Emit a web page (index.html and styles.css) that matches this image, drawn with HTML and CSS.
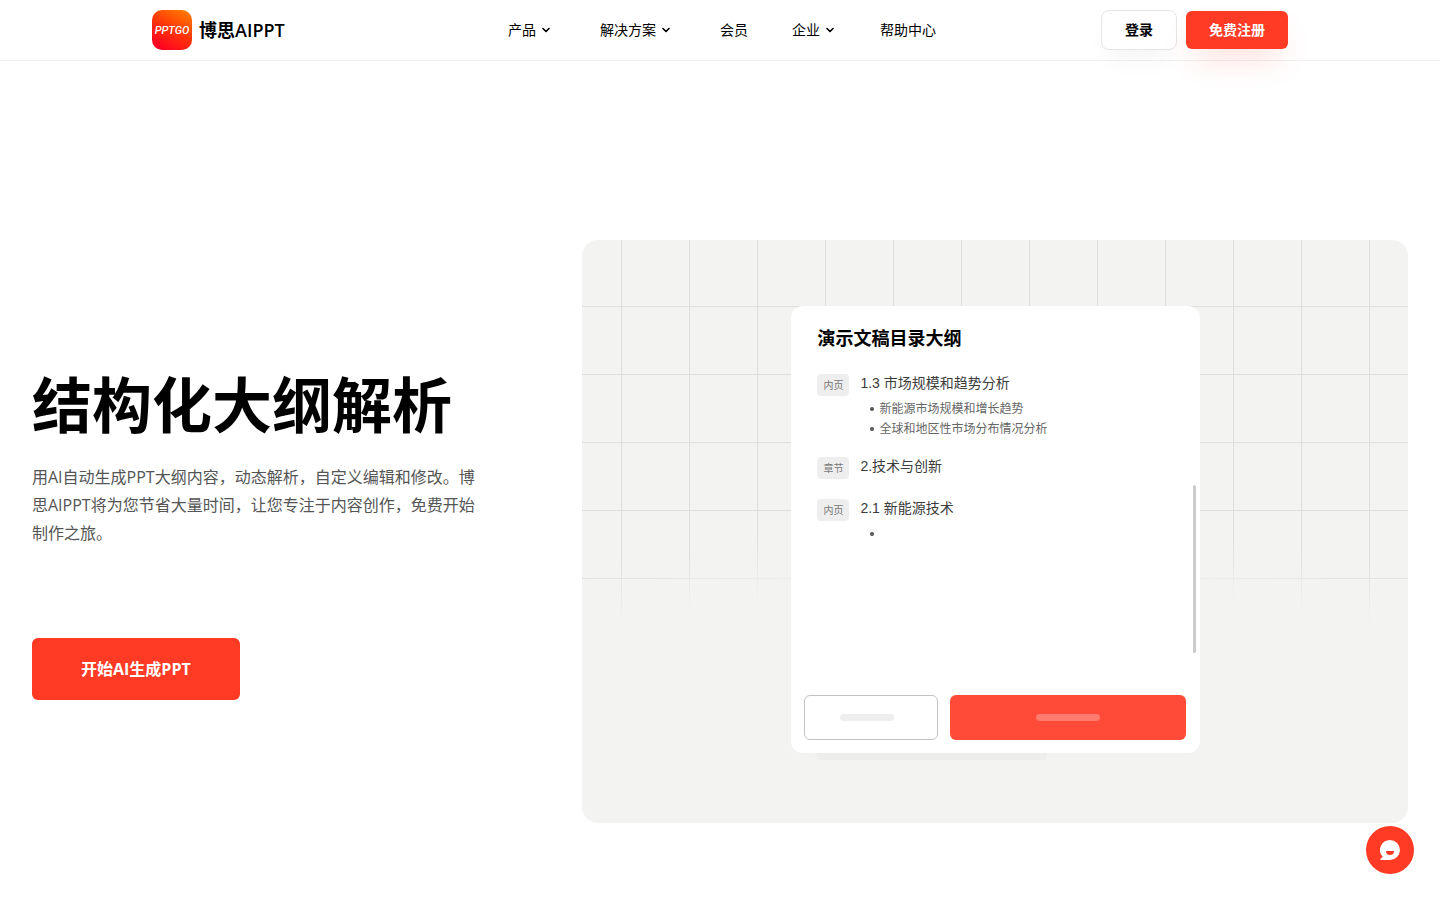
FILE: index.html
```html
<!DOCTYPE html>
<html lang="zh-CN">
<head>
<meta charset="utf-8">
<meta name="viewport" content="width=device-width, initial-scale=1">
<title>博思AIPPT</title>
<link rel="stylesheet" href="styles.css">
</head>
<body>
<header class="header">
  <div class="header-inner">
    <a class="brand" href="#">
      <svg class="brand-mark" viewBox="0 0 40 40" aria-hidden="true">
        <defs>
          <linearGradient id="mark" x1="0.25" y1="1" x2="0.8" y2="0">
            <stop offset="0" stop-color="#ff0024"/>
            <stop offset="0.5" stop-color="#ff3408"/>
            <stop offset="1" stop-color="#ff7a00"/>
          </linearGradient>
        </defs>
        <rect width="40" height="40" rx="10" fill="url(#mark)"/>
        <text x="20" y="24" text-anchor="middle" class="mark-text">PPTGO</text>
      </svg>
      <span class="brand-name">博思AIPPT</span>
    </a>
    <nav class="nav">
      <a href="#">产品<svg class="chevron" viewBox="0 0 8 6"><path d="M1 1.500l3 3 3-3"/></svg></a>
      <a href="#">解决方案<svg class="chevron" viewBox="0 0 8 6"><path d="M1 1.500l3 3 3-3"/></svg></a>
      <a href="#">会员</a>
      <a href="#">企业<svg class="chevron" viewBox="0 0 8 6"><path d="M1 1.500l3 3 3-3"/></svg></a>
      <a href="#">帮助中心</a>
    </nav>
    <div class="account">
      <button class="btn btn-login" type="button">登录</button>
      <button class="btn btn-register" type="button">免费注册</button>
    </div>
  </div>
</header>

<main class="hero">
  <section class="intro">
    <h1>结构化大纲解析</h1>
    <p>用AI自动生成PPT大纲内容，动态解析，自定义编辑和修改。博思AIPPT将为您节省大量时间，让您专注于内容创作，免费开始制作之旅。</p>
    <a class="cta" href="#">开始AI生成PPT</a>
  </section>

  <section class="panel">
    <svg class="panel-grid" aria-hidden="true">
      <defs>
        <pattern id="cells" x="39" y="66" width="68" height="68" patternUnits="userSpaceOnUse">
          <path d="M0 0.5H68M0.5 0V68" fill="none" stroke="#dededd"/>
        </pattern>
      </defs>
      <rect width="100%" height="100%" fill="url(#cells)"/>
    </svg>
    <div class="card">
      <h2>演示文稿目录大纲</h2>
      <ul class="outline">
        <li>
          <span class="tag">内页</span>
          <div class="entry">
            <h3>1.3 市场规模和趋势分析</h3>
            <ul class="points">
              <li>新能源市场规模和增长趋势</li>
              <li>全球和地区性市场分布情况分析</li>
            </ul>
          </div>
        </li>
        <li>
          <span class="tag">章节</span>
          <div class="entry"><h3>2.技术与创新</h3></div>
        </li>
        <li>
          <span class="tag">内页</span>
          <div class="entry">
            <h3>2.1 新能源技术</h3>
            <ul class="points"><li></li></ul>
          </div>
        </li>
      </ul>
      <div class="card-actions">
        <div class="ghost ghost-outline"><span></span></div>
        <div class="ghost ghost-solid"><span></span></div>
      </div>
      <div class="scroll-thumb"></div>
    </div>
    <div class="card-tail"></div>
  </section>
</main>

<button class="chat" type="button" aria-label="客服">
  <svg viewBox="0 0 20 20" aria-hidden="true">
    <path d="M10 0a10 10 0 1 1 0 20H1c-.8 0-1-.8-.5-1.200C1.500 18 2.300 17.400 2.600 16.700A10 10 0 0 1 10 0z" fill="#fff"/>
    <path d="M6 11h8a4 4 0 0 1-8 0z" fill="#ff3b26"/>
  </svg>
</button>
</body>
</html>
```
FILE: styles.css
```css
* {
  box-sizing: border-box;
}

body,
h1,
h2,
h3,
p,
ul {
  margin: 0;
  padding: 0;
}

ul {
  list-style: none;
}

body {
  min-height: 100vh;
  background: #fff;
  color: #000;
  font-family: "Open Sans", "Noto Sans CJK SC", sans-serif;
  font-size: 14px;
}

a {
  color: inherit;
  text-decoration: none;
}

button {
  font: inherit;
  cursor: pointer;
}

.header {
  border-bottom: 1px solid #f2f2f2;
}

.header-inner {
  display: grid;
  grid-template-columns: 1fr auto 1fr;
  align-items: center;
  max-width: 1136px;
  height: 60px;
  margin: 0 auto;
}

.brand {
  display: flex;
  align-items: center;
  gap: 7px;
}

.brand-mark {
  width: 40px;
  height: 40px;
}

.mark-text {
  fill: #fff;
  font-family: Roboto, sans-serif;
  font-size: 11px;
  font-style: italic;
  font-weight: 500;
}

.brand-name {
  font-size: 18px;
  font-weight: 600;
  line-height: 26px;
}

.nav {
  display: grid;
  grid-template-columns: 92px 120px 72px 88px 56px;
  padding-left: 4px;
  line-height: 20px;
}

.nav a {
  display: flex;
  align-items: center;
  gap: 6px;
}

.chevron {
  width: 8px;
  height: 6px;
  fill: none;
  stroke: #000;
  stroke-width: 1.6;
  stroke-linecap: round;
  stroke-linejoin: round;
}

.account {
  display: flex;
  align-items: center;
  justify-content: flex-end;
  gap: 9px;
}

.btn {
  border: 0;
  border-radius: 6px;
  font-weight: 600;
  line-height: 20px;
}

.btn-login {
  padding: 9px 23px;
  border: 1px solid #e6e6e6;
  border-radius: 8px;
  background: #fff;
  box-shadow: 0 16px 24px -8px rgba(0, 0, 0, 0.05);
}

.btn-register {
  padding: 9px 23px;
  background: #ff3b26;
  color: #fff;
  box-shadow: 0 16px 32px -8px rgba(255, 59, 38, 0.2);
}

.hero {
  display: grid;
  grid-template-columns: 2fr 3fr;
  align-items: center;
  padding: 179px 32px 77px;
}

.intro {
  padding-right: 104px;
}

.intro h1 {
  font-size: 60px;
  font-weight: 700;
  line-height: 84px;
  white-space: nowrap;
}

.intro p {
  margin: 16px 0 91px;
  color: #555;
  font-size: 16px;
  font-weight: 400;
  line-height: 28px;
}

.cta {
  display: inline-block;
  padding: 19px 49px;
  border-radius: 6px;
  background: #ff3b26;
  color: #fff;
  font-size: 16px;
  font-weight: 700;
  line-height: 24px;
  vertical-align: top;
}

.panel {
  position: relative;
  padding: 66px 208px 63px 209px;
  border-radius: 16px;
  background: #f3f3f1;
}

.panel-grid {
  position: absolute;
  inset: 0;
  width: 100%;
  height: 100%;
  mask-image: radial-gradient(circle at 50% 2161px, transparent 1815px, #000 1880px);
}

.card {
  position: relative;
  display: flex;
  flex-direction: column;
  min-height: 447px;
  padding: 18px 14px 13px 13px;
  border-radius: 12px;
  background: #fff;
}

.card h2 {
  margin: 0 13px 21px;
  font-size: 18px;
  font-weight: 600;
  line-height: 28px;
}

.outline {
  display: flex;
  flex-direction: column;
  gap: 17px;
  margin: 0 13px;
}

.outline > li {
  display: flex;
  align-items: flex-start;
  gap: 11px;
}

.tag {
  flex: none;
  width: 32px;
  margin: 1px 0 2px;
  border-radius: 4px;
  background: #eee;
  color: #777;
  font-size: 10px;
  line-height: 22px;
  text-align: center;
}

.entry h3 {
  color: #3c3c3c;
  font-family: "Liberation Sans", "Noto Sans CJK SC", sans-serif;
  font-size: 14px;
  font-weight: 400;
  line-height: 20px;
}

.points {
  margin-top: 6px;
  padding-left: 10px;
}

.points li {
  display: flex;
  align-items: center;
  gap: 5px;
  min-height: 20px;
  color: #666;
  font-size: 12px;
  line-height: 20px;
}

.points li::before {
  content: "";
  width: 4px;
  height: 4px;
  border-radius: 50%;
  background: #555;
}

.card-actions {
  display: flex;
  gap: 12px;
  margin-top: auto;
}

.ghost {
  display: flex;
  align-items: center;
  justify-content: center;
  height: 45px;
  border-radius: 6px;
}

.ghost span {
  height: 7px;
  border-radius: 4px;
}

.ghost-outline {
  flex: 132;
  border: 1px solid #c2c2c2;
}

.ghost-outline span {
  width: 54px;
  margin-right: 8px;
  background: #eee;
}

.ghost-solid {
  flex: 236;
  background: #ff4b37;
}

.ghost-solid span {
  width: 64px;
  background: #ff7b6d;
}

.scroll-thumb {
  position: absolute;
  top: 179px;
  right: 4px;
  width: 3px;
  height: 168px;
  border-radius: 2px;
  background: #ccc;
}

.card-tail {
  position: relative;
  width: 231px;
  height: 7px;
  margin-left: 25px;
  border-radius: 0 0 4px 4px;
  background: #ededec;
}

.chat {
  position: fixed;
  right: 26px;
  bottom: 26px;
  display: grid;
  place-items: center;
  width: 48px;
  height: 48px;
  padding: 0;
  border: 0;
  border-radius: 50%;
  background: #ff3b26;
}

.chat svg {
  width: 20px;
  height: 20px;
}
```
